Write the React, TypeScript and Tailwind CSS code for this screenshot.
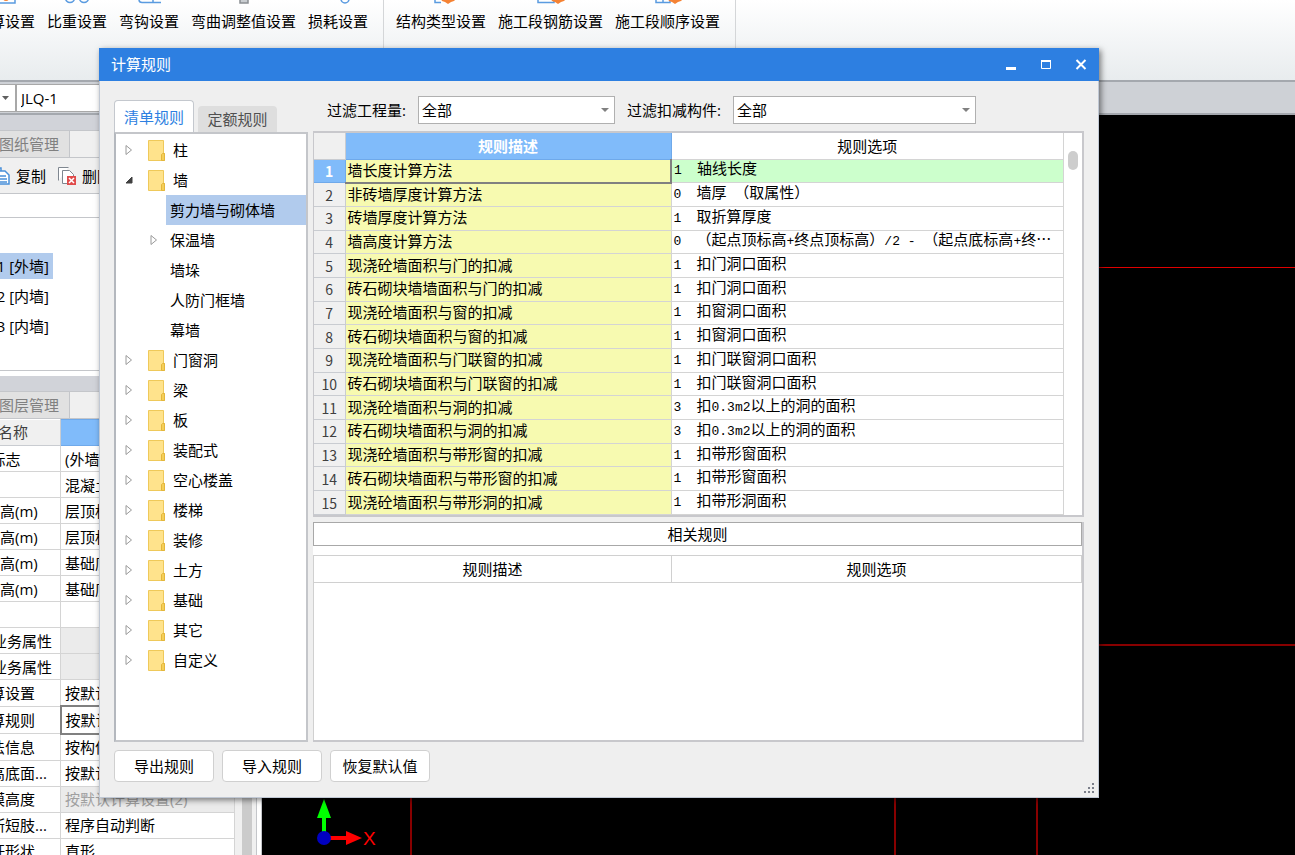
import React from "react";

type TreeNode = { name: string; open?: boolean };

const mainFolders: TreeNode[] = [{ name: "柱" }, { name: "墙", open: true }];

const wallChildren = [
  { name: "剪力墙与砌体墙", selected: true },
  { name: "保温墙", expandable: true },
  { name: "墙垛" },
  { name: "人防门框墙" },
  { name: "幕墙" },
];

const otherFolders: TreeNode[] = [
  { name: "门窗洞" },
  { name: "梁" },
  { name: "板" },
  { name: "装配式" },
  { name: "空心楼盖" },
  { name: "楼梯" },
  { name: "装修" },
  { name: "土方" },
  { name: "基础" },
  { name: "其它" },
  { name: "自定义" },
];

const rules = [
  ["墙长度计算方法", "1", "轴线长度"],
  ["非砖墙厚度计算方法", "0", "墙厚 （取属性）"],
  ["砖墙厚度计算方法", "1", "取折算厚度"],
  ["墙高度计算方法", "0", "（起点顶标高+终点顶标高）/2 - （起点底标高+终…"],
  ["现浇砼墙面积与门的扣减", "1", "扣门洞口面积"],
  ["砖石砌块墙墙面积与门的扣减", "1", "扣门洞口面积"],
  ["现浇砼墙面积与窗的扣减", "1", "扣窗洞口面积"],
  ["砖石砌块墙面积与窗的扣减", "1", "扣窗洞口面积"],
  ["现浇砼墙面积与门联窗的扣减", "1", "扣门联窗洞口面积"],
  ["砖石砌块墙面积与门联窗的扣减", "1", "扣门联窗洞口面积"],
  ["现浇砼墙面积与洞的扣减", "3", "扣0.3m2以上的洞的面积"],
  ["砖石砌块墙面积与洞的扣减", "3", "扣0.3m2以上的洞的面积"],
  ["现浇砼墙面积与带形窗的扣减", "1", "扣带形窗面积"],
  ["砖石砌块墙面积与带形窗的扣减", "1", "扣带形窗面积"],
  ["现浇砼墙面积与带形洞的扣减", "1", "扣带形洞面积"],
];

// level 0: plain, 1: section title, 2: inside a section
const properties = [
  { name: "内/外墙标志", value: "(外墙)", level: 0 },
  { name: "类别", value: "混凝土墙", level: 0 },
  { name: "起点顶标高(m)", value: "层顶标高", level: 0 },
  { name: "终点顶标高(m)", value: "层顶标高", level: 0 },
  { name: "起点底标高(m)", value: "基础底标高", level: 0 },
  { name: "终点底标高(m)", value: "基础底标高", level: 0 },
  { name: "备注", value: "", level: 0 },
  { name: "钢筋业务属性", value: "", level: 1 },
  { name: "土建业务属性", value: "", level: 1 },
  { name: "计算设置", value: "按默认计算设置", level: 2 },
  { name: "计算规则", value: "按默认计算规则", level: 2, focused: true },
  { name: "做法信息", value: "按构件做法", level: 2 },
  { name: "超高底面...", value: "按默认计算设置", level: 2 },
  { name: "支模高度", value: "按默认计算设置(2)", level: 2, disabled: true },
  { name: "判断短肢...", value: "程序自动判断", level: 2 },
  { name: "拉杆形状", value: "直形", level: 2 },
];

const levelPadding = ["pl-[3px]", "pl-[25px]", "pl-[38px]"];

const ribbonLeft = [
  { label: "计算设置", icon: "sheet" },
  { label: "比重设置", icon: "circles" },
  { label: "弯钩设置", icon: "hook" },
  { label: "弯曲调整值设置", icon: "block" },
  { label: "损耗设置", icon: "ring" },
];

const ribbonRight = [
  { label: "结构类型设置", icon: "gear" },
  { label: "施工段钢筋设置", icon: "gearBox" },
  { label: "施工段顺序设置", icon: "gearGrid" },
];

const RibbonIcon = ({ kind }: { kind: string }) => (
  <svg width="32" height="24" viewBox="0 0 32 24" fill="none" stroke="#5a9be0" strokeWidth="1.5">
    {kind === "sheet" && (
      <>
        <path d="M6 1h20v22H6z" />
        <circle cx="17" cy="18" r="3" fill="#f58233" stroke="none" />
      </>
    )}
    {kind === "circles" && (
      <>
        <circle cx="9" cy="18" r="4.5" />
        <circle cx="23" cy="18" r="4.5" />
      </>
    )}
    {kind === "hook" && <path d="M28 22.5H9a3 3 0 0 1-3-3V8M20 22V6" />}
    {kind === "block" && <path d="M12 6h8v17h-8z" fill="#c9cdd1" stroke="#8b8f93" />}
    {kind === "ring" && <circle cx="23" cy="19" r="4" />}
    {kind.startsWith("gear") && (
      <>
        {kind === "gear" && <path d="M10 2v20.500h6" />}
        {kind === "gearBox" && <path d="M3 4h16v18.500H3z" />}
        {kind === "gearGrid" && <path d="M4 4h14v18.500H4zM11 4v18M4 18h14" />}
        <path
          d="M23 10l3 3h3v4l2 2-2 2-3 1-3 2-3-2-3-1-1-2 1-2v-4h3z"
          fill="#f58233"
          stroke="none"
        />
      </>
    )}
  </svg>
);

const RibbonButton = ({ label, icon }: { label: string; icon: string }) => (
  <button type="button" className="flex flex-col items-center whitespace-nowrap">
    <RibbonIcon kind={icon} />
    <span className="mt-[5px] leading-6">{label}</span>
  </button>
);

const Arrow = ({ open }: { open?: boolean }) => (
  <svg width="10" height="12" viewBox="0 0 10 12" className="flex-none">
    {open ? (
      <path d="M8 3v6H2z" fill="#404040" stroke="#404040" strokeLinejoin="round" />
    ) : (
      <path d="M2 1.500v9l5.500-4.500z" fill="none" stroke="#9a9a9a" />
    )}
  </svg>
);

const Folder = () => (
  <svg width="17" height="21" viewBox="0 0 17 21" className="flex-none">
    <path d="M.5.5h15v13h1v7H.5z" fill="#ffe38c" stroke="#efc95a" />
    <path d="M13.500 20.500v-6l1-1h2v7z" fill="#f5cf58" stroke="#e3b63c" />
  </svg>
);

const FolderRow = ({ name, open }: TreeNode) => (
  <li className="flex h-[30px] items-center pl-2">
    <Arrow open={open} />
    <span className="ml-3.5">
      <Folder />
    </span>
    <span className="ml-2">{name}</span>
  </li>
);

// half width characters are drawn in the mono font
const MixedText = ({ text }: { text: string }) => (
  <>
    {text.split(/([ -~]+)/).map((part, i) =>
      i % 2 ? (
        <span key={i} className="font-['Liberation_Mono'] text-[13px] whitespace-pre">
          {part}
        </span>
      ) : (
        part
      )
    )}
  </>
);

const Filter = ({ id, label, className }: { id: string; label: string; className: string }) => (
  <>
    <label htmlFor={id} className="flex-none">
      {label}
    </label>
    <div className={`relative ml-3 ${className}`}>
      <select
        id={id}
        className="block h-7 w-full appearance-none border border-[#b0b0b0] bg-white pl-[3px] leading-5 outline-none"
      >
        <option>全部</option>
      </select>
      <svg width="8" height="4" className="pointer-events-none absolute top-3 right-1.5">
        <path d="M0 0h8l-4 4z" fill="#808080" />
      </svg>
    </div>
  </>
);

const PanelTab = ({ label }: { label: string }) => (
  <div className="flex h-7 flex-none border-y border-[#c4c6ca] bg-[#f0f0f0]">
    <button
      type="button"
      className="w-[134px] border-r border-[#c4c6ca] bg-[#e1e1e1] pr-2.5 text-right text-[#808080]"
    >
      {label}
    </button>
  </div>
);

const SidePanel = () => (
  <aside className="-ml-16 flex w-[326px] flex-none flex-col bg-[#d1d3d9] pt-[15px]">
    <PanelTab label="图纸管理" />
    <div className="flex h-9 flex-none items-center border-b border-[#c4c6ca] bg-[#f0f0f0] pl-[57px]">
      <button type="button" className="flex items-center gap-1.5">
        <svg width="17" height="18" viewBox="0 0 17 18" fill="#fff" stroke="#4a90d9" strokeWidth="1.5">
          <path d="M1 1h7v14H1z" />
          <path d="M5 4h7l4 4v9H5zM7 9h6M7 12h7M7 15h7" />
        </svg>
        复制
      </button>
      <button type="button" className="ml-3 flex items-center gap-1.5">
        <svg width="18" height="18" viewBox="0 0 18 18" fill="#fff" stroke="#7f8790">
          <path d="M.5 13.500V.5h10" />
          <path d="M4.500 3.500h7l4 4v9h-11z" />
          <path d="M9 9h9v9H9z" fill="#e04b4b" stroke="none" />
          <path d="M11 11l5 5M16 11l-5 5" stroke="#fff" strokeWidth="1.500" />
        </svg>
        删除
      </button>
    </div>
    <div className="h-[177px] flex-none border-b border-[#c4c6ca] bg-white">
      <div className="h-6 border-b border-[#c4c6ca]" />
      <ul className="mt-[35px] w-[117px] text-right">
        <li className="mb-1 h-[26px] bg-[#b1cbed] pr-1 leading-[26px]">JLQ-1 [外墙]</li>
        <li className="mb-1 h-[26px] pr-1 leading-[26px]">JLQ-2 [内墙]</li>
        <li className="mb-1 h-[26px] pr-1 leading-[26px]">JLQ-3 [内墙]</li>
      </ul>
    </div>
    <div className="h-[5px] flex-none bg-white" />
    <div className="h-[15px] flex-none" />
    <PanelTab label="图层管理" />
    <div className="flex bg-[#f0f0f0]">
      <table className="h-[446px] w-[299px] table-fixed border-collapse bg-white leading-5">
        <thead>
          <tr className="h-[26px]">
            <th className="w-[124px] border-r border-b border-[#c9ccd1] bg-[#f0f0f0] pr-8 text-right font-normal text-[#404040]">
              属性名称
            </th>
            <th className="border border-[#6fa9ea] bg-[#80bbfa] text-white">属性值</th>
          </tr>
        </thead>
        <tbody>
          {properties.map((p) => (
            <tr key={p.name}>
              <td className={`border border-[#d4d4d4] whitespace-nowrap ${levelPadding[p.level]}`}>
                {p.name}
              </td>
              <td
                className={`pl-1 whitespace-nowrap ${
                  p.focused ? "border-2 border-[#808080]" : "border border-[#d4d4d4]"
                } ${p.level === 1 || p.disabled ? "bg-[#ebebeb] text-[#a0a0a0]" : ""}`}
              >
                {p.value}
              </td>
            </tr>
          ))}
        </tbody>
      </table>
      <div className="ml-[7px] w-2.5 bg-[#cbcbcb]" />
      <div className="ml-1 w-1.5 border-x border-[#c4c6ca] bg-white" />
    </div>
  </aside>
);

const Canvas = () => (
  <main className="min-w-0 flex-1 bg-black">
    <svg className="block h-full w-full">
      <path d="M0 152.500H4000" stroke="#e00000" />
      <path d="M0 530H4000M149 0V4000M633 0V4000M775 0V4000" stroke="#880000" strokeWidth="2" />
      <path d="M60 722V703h-5l7-19 7 19h-5v19z" fill="#00ff00" />
      <path d="M64 721h20v-5l16 7-16 7v-5H64z" fill="#ff0000" />
      <circle cx="62" cy="723" r="7" fill="#0000c0" />
      <text x="101" y="730" fill="#ff0000" fontSize="19" fontFamily="Liberation Sans">
        X
      </text>
    </svg>
  </main>
);

const RulesDialog = () => (
  <div
    role="dialog"
    aria-labelledby="dialog-title"
    className="absolute top-12 right-[196px] bottom-[57px] left-[99px] flex flex-col bg-[#efefef] shadow-[2px_2px_6px_rgba(0,0,0,0.5)]"
  >
    <div className="flex h-[33px] flex-none items-center bg-[#2d7fe1] pb-0.5 pl-3 text-white">
      <h1 id="dialog-title" className="flex-1">
        计算规则
      </h1>
      <div className="flex gap-[21px] pr-[11px]">
        <button type="button" aria-label="最小化">
          <svg width="14" height="14" className="block">
            <path d="M2 10h10v3H2z" fill="#fff" />
          </svg>
        </button>
        <button type="button" aria-label="最大化">
          <svg width="14" height="14" className="block" fill="none" stroke="#fff">
            <path d="M2.500 3.500h9v8h-9z" />
            <path d="M2 4h10" strokeWidth="2" />
          </svg>
        </button>
        <button type="button" aria-label="关闭">
          <svg width="14" height="14" className="block" fill="none" stroke="#fff" strokeWidth="2">
            <path d="M2.500 3l9 9M11.500 3l-9 9" />
          </svg>
        </button>
      </div>
    </div>

    <div className="flex min-h-0 flex-1 flex-col border-x border-b border-[#c0c8d4] px-3.5">
      <div className="flex min-h-0 flex-1">
        <div className="flex w-[194px] flex-none flex-col">
          <div className="flex h-[51px] flex-none items-end gap-1">
            <button
              type="button"
              className="h-8 w-20 rounded-t border border-b-0 border-[#c4c8ce] bg-white text-[#2d7fe1]"
            >
              清单规则
            </button>
            <button type="button" className="h-[26px] w-[79px] rounded-t bg-[#dedede] text-[#505050]">
              定额规则
            </button>
          </div>
          <ul className="flex-1 border-2 border-[#c4c6ca] border-l-[#b4b8be] bg-white pt-px">
            {mainFolders.map((n) => (
              <FolderRow key={n.name} {...n} />
            ))}
            {wallChildren.map((c) => (
              <li key={c.name} className="flex h-[30px] items-center pl-[33px]">
                <span className="w-[17px]">{c.expandable && <Arrow />}</span>
                <span
                  className={`flex h-[30px] flex-1 items-center pl-1 ${c.selected ? "bg-[#b1cbed]" : ""}`}
                >
                  {c.name}
                </span>
              </li>
            ))}
            {otherFolders.map((n) => (
              <FolderRow key={n.name} {...n} />
            ))}
          </ul>
        </div>

        <div className="ml-[5px] flex min-w-0 flex-1 flex-col">
          <div className="flex h-[50px] flex-none items-center pt-2 pl-3.5">
            <Filter id="quantity" label="过滤工程量:" className="w-[197px]" />
            <span className="w-3" />
            <Filter id="component" label="过滤扣减构件:" className="w-[243px]" />
          </div>

          <div className="flex flex-none border-2 border-l border-[#c8c8cc] bg-white">
            <table className="h-[382px] flex-1 table-fixed border-collapse font-['Noto_Sans_CJK_SC',sans-serif] leading-4">
              <thead>
                <tr className="h-[26px]">
                  <th className="w-[31px] border-r border-b border-[#c9ccd1] bg-[#f0f0f0]" />
                  <th className="w-[326px] border-r border-b border-[#6fa9ea] bg-[#80bbfa] text-white">
                    规则描述
                  </th>
                  <th className="border-r border-b border-[#d4d4d4] font-normal">规则选项</th>
                </tr>
              </thead>
              <tbody>
                {rules.map(([desc, code, option], i) => (
                  <tr key={desc}>
                    <td
                      className={`border-r border-b p-0 text-center text-sm leading-4 ${
                        i === 0
                          ? "border-[#6fa9ea] bg-[#80bbfa] font-bold text-white"
                          : "border-[#c9ccd1] bg-[#f0f0f0] text-[#404040]"
                      }`}
                    >
                      {i + 1}
                    </td>
                    <td
                      className={`bg-[#f7fab0] p-0 pb-0.5 pl-0.5 ${
                        i === 0 ? "border-r-2 border-b-2 border-[#808080]" : "border-r border-b border-[#d4d4d4]"
                      }`}
                    >
                      {desc}
                    </td>
                    <td
                      className={`border-r border-b border-[#d4d4d4] p-0 pb-0.5 pl-0.5 whitespace-nowrap ${
                        i === 0 ? "bg-[#ccffcc]" : ""
                      }`}
                    >
                      <span className="inline-block w-[23px] font-['Liberation_Mono'] text-[13px]">{code}</span>
                      <MixedText text={option} />
                    </td>
                  </tr>
                ))}
              </tbody>
            </table>
            <div className="w-[18px] pt-[18px] pl-1">
              <div className="h-[19px] w-2.5 rounded-full bg-[#cdcdcd]" />
            </div>
          </div>

          <div className="mt-[5px] flex min-h-0 flex-1 flex-col border-r-2 border-b-2 border-[#c8c8cc] bg-white">
            <h2 className="h-6 flex-none border border-[#a8a8a8] text-center leading-[22px]">相关规则</h2>
            <table className="mt-[9px] w-full table-fixed border-collapse font-['Noto_Sans_CJK_SC',sans-serif]">
              <thead>
                <tr className="h-[27px]">
                  <th className="w-[358px] border border-[#d0d0d0] font-normal">规则描述</th>
                  <th className="border border-[#d0d0d0] font-normal">规则选项</th>
                </tr>
              </thead>
            </table>
            <div className="flex-1 border-l border-[#d0d0d0]" />
          </div>
        </div>
      </div>

      <div className="flex h-[55px] flex-none items-start gap-2 pt-2">
        {["导出规则", "导入规则", "恢复默认值"].map((text) => (
          <button
            key={text}
            type="button"
            className="h-8 w-[100px] rounded border border-[#d0d0d0] bg-white leading-5"
          >
            {text}
          </button>
        ))}
      </div>
    </div>
    <svg width="11" height="11" className="absolute right-1 bottom-1" fill="#7b7f8a">
      <path d="M8 0h2v2h-2zM4 4h2v2h-2zM8 4h2v2h-2zM0 8h2v2h-2zM4 8h2v2h-2zM8 8h2v2h-2z" />
    </svg>
  </div>
);

const App = () => {
  return (
    <div
      lang="zh-CN"
      className="relative flex h-screen flex-col overflow-hidden bg-black font-['Open_Sans','Noto_Sans_CJK_SC',sans-serif] text-[15px] leading-6 text-black"
    >
      <header className="h-[82px] flex-none overflow-hidden border-b-2 border-[#a4a8ae] bg-linear-to-b from-white to-[#e8ecee]">
        <div className="-mt-5 flex h-[102px] items-stretch">
          <div className="-ml-[25px] flex items-start gap-3 border-r border-[#d4d6d8] pr-[15px]">
            {ribbonLeft.map((item) => (
              <RibbonButton key={item.label} {...item} />
            ))}
          </div>
          <div className="flex items-start gap-3 border-r border-[#d4d6d8] pr-[15px] pl-3">
            {ribbonRight.map((item) => (
              <RibbonButton key={item.label} {...item} />
            ))}
          </div>
        </div>
      </header>
      <div className="flex h-[33px] flex-none items-center border-b-2 border-[#a4a8ae] bg-[#ced1d6]">
        <button
          type="button"
          aria-label="楼层"
          className="flex h-7 w-4 items-center border border-l-0 border-[#a8a8a8] bg-white pl-0.5"
        >
          <svg width="8" height="4">
            <path d="M0 0h7l-3.500 4z" fill="#606060" />
          </svg>
        </button>
        <input
          aria-label="构件"
          defaultValue="JLQ-1"
          className="h-7 w-60 border border-[#a8a8a8] bg-white pl-1 outline-none"
        />
      </div>
      <div className="flex min-h-0 flex-1">
        <SidePanel />
        <Canvas />
      </div>
      <RulesDialog />
    </div>
  );
};

export default App;
